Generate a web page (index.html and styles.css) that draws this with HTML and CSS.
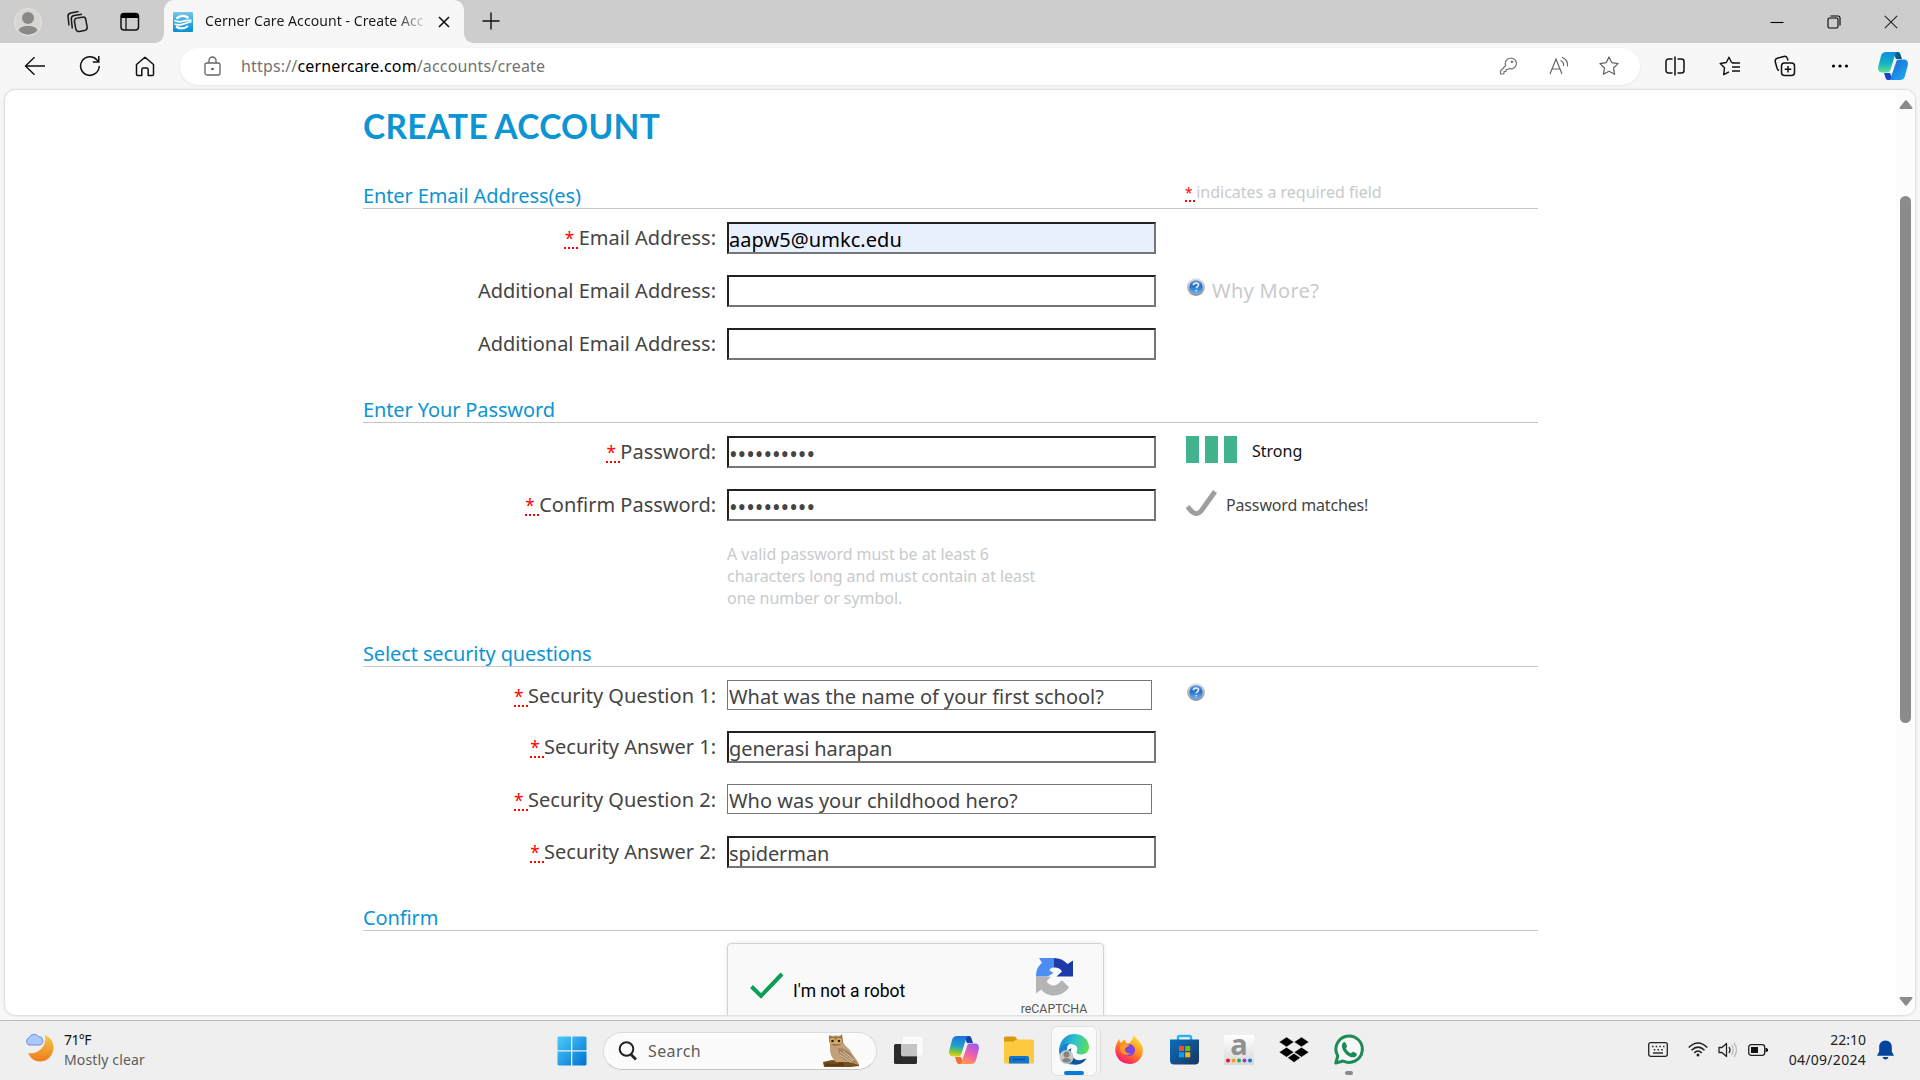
FILE: index.html
```html
<!DOCTYPE html>
<html lang="en">
<head>
<meta charset="utf-8">
<title>Cerner Care Account - Create Account</title>
<link rel="stylesheet" href="styles.css">
</head>
<body>
<svg class="defs" width="0" height="0">
  <defs>
    <linearGradient id="help-ball" x1="0" y1="0" x2="0" y2="1"><stop offset="0" stop-color="#5a9ae0"/><stop offset=".45" stop-color="#2a6fc9"/><stop offset="1" stop-color="#58b4ff"/></linearGradient>
    <linearGradient id="help-rim" x1="0" y1="0" x2="0" y2="1"><stop offset="0" stop-color="#e6e6e6"/><stop offset="1" stop-color="#8f9296"/></linearGradient>
    <symbol id="help" viewBox="0 0 18 18">
      <circle cx="9" cy="9" r="9" fill="url(#help-rim)"/>
      <circle cx="9" cy="9" r="6.7" fill="url(#help-ball)"/>
      <path d="M6.4 7.3c0-1.6 1.1-2.4 2.6-2.4s2.6.8 2.6 2.1c0 1.7-2.3 1.6-2.3 3.2M9.3 12v1.5" fill="none" stroke="#e8f2ff" stroke-width="1.500"/>
    </symbol>
    <linearGradient id="cp-a" x1="0" y1="0" x2="0" y2="1"><stop offset="0" stop-color="#0b8fdc"/><stop offset=".55" stop-color="#14b3c4"/><stop offset="1" stop-color="#5be38c"/></linearGradient>
    <linearGradient id="cp-b" x1="0" y1="0" x2="1" y2="1"><stop offset="0" stop-color="#1d5fd0"/><stop offset="1" stop-color="#1fb0f5"/></linearGradient>
    <linearGradient id="cq-a" x1=".3" y1="0" x2=".2" y2="1"><stop offset="0" stop-color="#1a74e0"/><stop offset=".5" stop-color="#23a6c2"/><stop offset=".75" stop-color="#7fc63c"/><stop offset="1" stop-color="#f5d20b"/></linearGradient>
    <linearGradient id="cq-b" x1=".7" y1="0" x2=".3" y2="1"><stop offset="0" stop-color="#9a5af5"/><stop offset=".5" stop-color="#ee5fae"/><stop offset="1" stop-color="#ff9a4d"/></linearGradient>
  </defs>
</svg>

<div class="browser">
  <header class="tabstrip">
    <div class="tabstrip-tools">
      <svg class="avatar" width="28" height="34" viewBox="0 0 28 34"><ellipse cx="14" cy="17" rx="13.500" ry="13.500" fill="#d7d5d1" stroke="#e7e5e1"/><circle cx="14" cy="13" r="6" fill="#8b8886"/><path d="M4.5 25.5c1-3 4-4.500 9.500-4.500s8.500 1.500 9.500 4.500a13 13 0 0 1-19 0z" fill="#8b8886"/></svg>
      <svg class="copies" width="24" height="24" viewBox="0 0 24 24" fill="none" stroke="#1b1b1b" stroke-width="1.500"><rect x="9" y="7.500" width="11.500" height="13.500" rx="3" transform="rotate(-10 15 14)"/><path d="M6.300 18.500L5.300 9c-.2-2 .8-3 2.800-3.400L16 4.200M3 15.500L2 6.500c-.2-2 .8-3 2.800-3.400L12.500 1.500"/></svg>
      <svg class="vtabs" width="20" height="20" viewBox="0 0 20 20"><rect x="1" y="1.500" width="17.500" height="16.500" rx="3" fill="none" stroke="#111" stroke-width="1.500"/><path d="M1 6V4a3 3 0 0 1 3-3h11.500a3 3 0 0 1 3 3v2z" fill="#000"/><path d="M6 6v12" stroke="#111" stroke-width="1.300"/></svg>
    </div>
    <div class="tab">
      <svg width="20" height="20" viewBox="0 0 20 20"><defs><linearGradient id="fav" x1="0" y1="0" x2="0" y2="1"><stop offset="0" stop-color="#7cc6e6"/><stop offset=".5" stop-color="#35a9de"/><stop offset="1" stop-color="#0a8fd3"/></linearGradient></defs><rect width="20" height="20" rx="1" fill="url(#fav)"/><path d="M3.500 6.500Q9.500 1.500 15.500 6" fill="none" stroke="#fff" stroke-width="2.400"/><path d="M1.500 8.500q4 2 8 .8t9-.8M1.500 12q4 1.500 8 .3t9-2.800" fill="none" stroke="#fff" stroke-width="1.800"/><path d="M3 14.500q6 4.200 12-.5" fill="none" stroke="#fff" stroke-width="2.200"/></svg>
      <span class="tab-title">Cerner Care Account - Create Acc</span>
      <svg class="tab-close" width="12" height="12" viewBox="0 0 12 12"><path d="M1 1l10 10M11 1L1 11" stroke="#111" stroke-width="1.600"/></svg>
    </div>
    <svg class="tab-new" width="18" height="18" viewBox="0 0 18 18"><path d="M9 .5v17M.5 9h17" stroke="#111" stroke-width="1.400"/></svg>
    <div class="window-buttons">
      <svg width="14" height="14" viewBox="0 0 14 14"><path d="M.5 7.500h13" stroke="#000" stroke-width="1.100"/></svg>
      <svg width="14" height="14" viewBox="0 0 14 14" fill="none" stroke="#000" stroke-width="1.100"><rect x="1" y="3" width="10" height="10" rx="1.500"/><path d="M3.500 1h7.500a2 2 0 0 1 2 2v7.500"/></svg>
      <svg width="14" height="14" viewBox="0 0 14 14"><path d="M.8.800l12.400 12.400M13.200.8L.8 13.200" stroke="#222" stroke-width="1.100"/></svg>
    </div>
  </header>

  <nav class="toolbar">
    <div class="slot"><svg width="22" height="20" viewBox="0 0 22 20" fill="none" stroke="#111" stroke-width="1.400"><path d="M21 10H1.500M10.500 1.200L1.500 10l9 8.800"/></svg></div>
    <div class="slot"><svg width="22" height="22" viewBox="0 0 22 22" fill="none" stroke="#111" stroke-width="1.500"><path d="M20.200 11A9.300 9.300 0 1 1 17.800 4.800l1.700 1.900M19.800 1v6h-6"/></svg></div>
    <div class="slot"><svg width="20" height="21" viewBox="0 0 20 21" fill="none" stroke="#111" stroke-width="1.500" stroke-linejoin="round"><path d="M1.500 8.500L10 1.200l8.500 7.300V18.500a1 1 0 0 1-1 1h-4.300v-5.800c0-1.200-.8-1.700-1.700-1.700h-3c-1 0-1.700.5-1.700 1.700v5.800H2.500a1 1 0 0 1-1-1z"/></svg></div>
    <div class="address">
      <svg class="lock" width="17" height="20" viewBox="0 0 17 20" fill="none" stroke="#666" stroke-width="1.300"><rect x="1" y="7" width="15" height="12" rx="2"/><path d="M5 7V4.500a3.500 3.500 0 0 1 7 0V7"/><circle cx="8.500" cy="13" r="1.300" fill="#555" stroke="none"/></svg>
      <span class="url">https://<b>cernercare.com</b>/accounts/create</span>
      <svg class="addr-icon" width="18" height="18" viewBox="0 0 18 18" fill="none" stroke="#767676" stroke-width="1.200" stroke-linejoin="round"><path d="M11.500 1.200a5.300 5.300 0 1 1-1.300 10.200L8.800 12.500H7v2H5v2l-.6.500H1.500V14l5.200-5.500A5.300 5.300 0 0 1 11.500 1.200z"/><circle cx="13" cy="4.800" r=".8"/></svg>
      <svg class="addr-icon" width="20" height="20" viewBox="0 0 20 20" fill="none" stroke="#666" stroke-width="1.200"><path d="M1 18L7 3l6 15M3.200 13h7.700M11.500 4.500a5 5 0 0 1 3 5.500M13 1.200a9 9 0 0 1 5.500 9.300"/></svg>
      <svg class="addr-icon last" width="20" height="20" viewBox="0 0 20 20" fill="none" stroke="#666" stroke-width="1.300" stroke-linejoin="round"><path d="M10 1l2.800 5.700 6.300.9-4.600 4.400 1.100 6.300L10 15.300l-5.600 3 1.100-6.300L.9 7.600l6.300-.9z"/></svg>
    </div>
    <div class="slot"><svg width="20" height="20" viewBox="0 0 20 20" fill="none" stroke="#111" stroke-width="1.500"><path d="M7.500 3H3.500a2.500 2.500 0 0 0-2.500 2.500v9A2.500 2.500 0 0 0 3.500 17h4M12.500 3h4A2.500 2.500 0 0 1 19 5.500v9a2.500 2.500 0 0 1-2.500 2.500h-4M10 .5v19"/></svg></div>
    <div class="slot"><svg width="22" height="20" viewBox="0 0 22 20" fill="none" stroke="#111" stroke-width="1.400" stroke-linejoin="round"><path d="M12.500 6.500L10 1.200 7.300 6.500 1.200 7.500l4.300 4.200-.8 7 5.300-2.900M12.500 6.500l4.500.6M13 11h8M13 7h8M13 15h8" /></svg></div>
    <div class="slot"><svg width="22" height="22" viewBox="0 0 22 22" fill="none" stroke="#111" stroke-width="1.500"><rect x="7.500" y="8" width="13" height="12.500" rx="3"/><path d="M14 11v6.500M10.700 14.200h6.600M5 15.500a4 4 0 0 1-2.200-3L1.200 6.500a3 3 0 0 1 2-3.300L10 1.400a3 3 0 0 1 3.300 1.800l.7 2.300"/></svg></div>
    <div class="slot"><svg width="18" height="4" viewBox="0 0 18 4"><circle cx="2.500" cy="2" r="1.600"/><circle cx="9" cy="2" r="1.600"/><circle cx="15.500" cy="2" r="1.600"/></svg></div>
    <div class="slot copilot-slot"><svg width="30" height="28" viewBox="0 0 30 28"><path d="M15 0h5c1.500 0 2.200 1.200 2.700 3l1.300 4h-6z" fill="#0b5a86"/><path d="M8 0h11c-1.500 1-2 2.500-2.500 4.500L13 17c-.8 2.500-2 3.500-4.500 3.500H4C0 20.500-.5 17 .5 13.500L3 4C4 1 5.500 0 8 0z" fill="url(#cp-a)"/><path d="M15 28h-5c-1.500 0-2.200-1.200-2.700-3L6 21h6z" fill="#1742c9"/><path d="M22 28H11c1.500-1 2-2.500 2.500-4.500L17 11c.8-2.500 2-3.500 4.500-3.500H26c4 0 4.500 3.500 3.500 7L27 24c-1 3-2.500 4-5 4z" fill="url(#cp-b)"/><path d="M19 7.500L14.500 20.500 11.500 20.500 16 7.500z" fill="#f7f7f7"/></svg></div>
  </nav>

  <div class="viewport">
    <main class="page">
      <h1>CREATE ACCOUNT</h1>

      <section>
        <div class="section-head"><h2>Enter Email Address(es)</h2><p class="required-note"><abbr>* </abbr>indicates a required field</p></div>
        <div class="row"><label><abbr>* </abbr>Email Address:</label><input class="autofill" value="aapw5@umkc.edu"></div>
        <div class="row"><label>Additional Email Address:</label><input><div class="aside why"><svg width="18" height="18"><use href="#help"/></svg><span>Why More?</span></div></div>
        <div class="row"><label>Additional Email Address:</label><input></div>
      </section>

      <section>
        <div class="section-head"><h2>Enter Your Password</h2></div>
        <div class="row"><label><abbr>* </abbr>Password:</label><input class="dots" type="password" value="passw0rd12"><div class="aside strength"><i></i><i></i><i></i><span>Strong</span></div></div>
        <div class="row"><label><abbr>* </abbr>Confirm Password:</label><input class="dots" type="password" value="passw0rd12"><div class="aside match"><svg width="32" height="30" viewBox="0 0 32 30"><path d="M1.500 17.500l4 4.700q5 5 9.500 0L29 2.500" fill="none" stroke="#9f9f9f" stroke-width="5"/></svg><span>Password matches!</span></div></div>
        <p class="hint">A valid password must be at least 6<br>characters long and must contain at least<br>one number or symbol.</p>
      </section>

      <section>
        <div class="section-head"><h2>Select security questions</h2></div>
        <div class="row row-q1"><label><abbr>* </abbr>Security Question 1:</label><div class="select">What was the name of your first school?</div><div class="aside q-help"><svg width="18" height="18"><use href="#help"/></svg></div></div>
        <div class="row"><label><abbr>* </abbr>Security Answer 1:</label><input value="generasi harapan"></div>
        <div class="row row-q2"><label><abbr>* </abbr>Security Question 2:</label><div class="select">Who was your childhood hero?</div></div>
        <div class="row"><label><abbr>* </abbr>Security Answer 2:</label><input value="spiderman"></div>
      </section>

      <section>
        <div class="section-head"><h2>Confirm</h2></div>
        <div class="captcha">
          <svg class="captcha-tick" width="36" height="28" viewBox="0 0 36 28"><path d="M2.500 14.500l9.500 9.500L33 2" fill="none" stroke="#0c9d58" stroke-width="4"/></svg>
          <span class="captcha-text">I'm not a robot</span>
          <div class="captcha-brand">
            <svg width="38" height="39" viewBox="0 0 38 39"><path d="M1 19.500C1 13 3.500 8.500 7 6L4 1h15v9.500c-3 0-4.500 1.500-4.500 3l4 2.500-6 3.500z" fill="#4c8df5"/><path d="M19 1c5.500 0 10 2 13.500 6L38 3.500v16H21.500l5.500-5c-1.500-3-4.500-4.300-8-4z" fill="#1c3aa9"/><path d="M1 19.500h15l-4.300 4.800c2 4.500 8 5.500 11.800 2.200l3.500-3.200 7 7C29.500 36.500 24 38.500 19 38.500c-5.500 0-10-2.300-12.800-6L1 36.500z" fill="#b4b4b4"/></svg>
            <span>reCAPTCHA</span>
          </div>
        </div>
      </section>
    </main>
    <div class="scrollbar">
      <svg width="14" height="10" viewBox="0 0 14 10"><path d="M1.500 9a1 1 0 0 1-.8-1.500L5.800 1a1.500 1.500 0 0 1 2.400 0l5.100 6.500a1 1 0 0 1-.8 1.500z" fill="#8b8b8b"/></svg>
      <div class="thumb"></div>
      <svg width="14" height="10" viewBox="0 0 14 10"><path d="M1.500 1a1 1 0 0 0-.8 1.500L5.800 9a1.500 1.500 0 0 0 2.400 0l5.100-6.500a1 1 0 0 0-.8-1.500z" fill="#8b8b8b"/></svg>
    </div>
  </div>
</div>

<footer class="taskbar">
  <div class="weather">
    <svg width="29" height="30" viewBox="0 0 29 30"><defs><linearGradient id="moon" x1="0" y1="0" x2="0" y2="1"><stop offset="0" stop-color="#f6c944"/><stop offset="1" stop-color="#ee7b1c"/></linearGradient></defs><path d="M20 2c5 2 8.500 6.500 8.500 12.500 0 8-6 14-13.500 14-5 0-9.500-2.700-12-8.500 8 1.500 19-4 17-18z" fill="url(#moon)"/><path d="M4 12a4 4 0 0 1 .3-7.500A5.300 5.300 0 0 1 13.500 3.500a4.300 4.300 0 0 1 1 8.500z" fill="#a9c8fb" stroke="#6b8fe0"/></svg>
    <div><p class="temp">71°F</p><p class="sky">Mostly clear</p></div>
  </div>
  <svg class="start" width="30" height="30" viewBox="0 0 30 30"><defs><linearGradient id="win" gradientUnits="userSpaceOnUse" x1="0" y1="0" x2="30" y2="30"><stop offset="0" stop-color="#4ccdfb"/><stop offset="1" stop-color="#0070d0"/></linearGradient></defs><path d="M1.500.500H14v13.700H.5V1.500zM15.300.500h13.200l1 1v12.700H15.300zM.5 15.500H14v14H1.500l-1-1zM15.300 15.500h14.200v13l-1 1H15.300z" fill="url(#win)"/></svg>
  <div class="search">
    <svg width="20" height="20" viewBox="0 0 20 20" fill="none" stroke="#222" stroke-width="2"><circle cx="8.500" cy="8" r="6.800"/><path d="M13 13.500l5 5" stroke-width="2.600"/></svg>
    <span>Search</span>
    <svg class="owl" width="37" height="33" viewBox="0 0 37 33"><path d="M0 28l9-2 12 1 15 3v2l-8 1H1z" fill="#76501c"/><path d="M2 29l10 1 8-2 1 4H2z" fill="#5e3c10"/><path d="M7 2q6-1 12 0l1 6q2 4 6 7l9 13 1 3-9-3H13Q6 22 7 12z" fill="#c2a078"/><path d="M15 14q6 0 11 4l9 12-8-2Q16 26 15 14z" fill="#a48460"/><path d="M17 18l13 9M17 21l11 7M20 17l11 9" stroke="#e6d8c0" stroke-width=".8"/><path d="M6 1l4 2q4-1 6 0l3-3 1 8q-3 4-7 4T6 8z" fill="#9a7648"/><circle cx="9.500" cy="7" r="3" fill="#d8b070"/><circle cx="16" cy="7" r="3" fill="#d8b070"/><circle cx="9.500" cy="7" r="1.300" fill="#2a1c08"/><circle cx="16" cy="7" r="1.300" fill="#2a1c08"/><path d="M12 8h2l-1 3z" fill="#f0d060"/></svg>
  </div>
  <div class="apps">
    <div class="app"><svg width="30" height="28" viewBox="0 0 30 28"><rect x="0" y="8" width="23" height="20" rx="1.500" fill="#2b2b2b"/><rect x="7.500" y="0" width="22" height="20" rx="1.500" fill="#fafafa" stroke="#e0e0e0" stroke-width=".6"/><path d="M7.500 8H23v12H9q-1.500 0-1.500-1.500z" fill="#c4c4c4"/></svg></div>
    <div class="app"><svg width="30" height="28" viewBox="0 0 30 28"><path d="M15 0h5c1.500 0 2.200 1.200 2.700 3l1.300 4h-6z" fill="#1544a8"/><path d="M8 0h11c-1.500 1-2 2.500-2.500 4.500L13 17c-.8 2.500-2 3.500-4.500 3.500H4C0 20.500-.5 17 .5 13.500L3 4C4 1 5.500 0 8 0z" fill="url(#cq-a)"/><path d="M15 28h-5c-1.500 0-2.200-1.200-2.700-3L6 21h6z" fill="#f0702f"/><path d="M22 28H11c1.500-1 2-2.500 2.500-4.500L17 11c.8-2.500 2-3.500 4.500-3.500H26c4 0 4.500 3.500 3.500 7L27 24c-1 3-2.500 4-5 4z" fill="url(#cq-b)"/><path d="M19 7.500L14.500 20.500 11.500 20.500 16 7.500z" fill="#efefef"/></svg></div>
    <div class="app"><svg width="30" height="28" viewBox="0 0 30 28"><path d="M0 1.500Q0 .5 1.500.5h8.500q1 0 1.500.5l2 2.500v4H0z" fill="#d79a08"/><path d="M0 5.500h8q2 0 3-1l1-1h16.500q1.500 0 1.500 1.500v21q0 1.500-1.500 1.500h-27Q0 27.500 0 26z" fill="#fdca3f"/><path d="M5 27.500V22q0-2 2-2h16q2 0 2 2v5.500z" fill="#1275cf"/><path d="M9 23.500h12" stroke="#0a4d94" stroke-width="1.200"/></svg></div>
    <div class="app active"><svg width="30" height="31" viewBox="0 0 30 31"><defs><linearGradient id="edge-top" x1="0" y1=".3" x2="1" y2=".5"><stop offset="0" stop-color="#1b8bd8"/><stop offset=".5" stop-color="#2cc3d0"/><stop offset="1" stop-color="#5fdd57"/></linearGradient></defs><path d="M0 16C1 6 7 0 15.500 0 24 0 30 6 30 13c0 5-4 7.500-8 7.500-3 0-5-1-4.500-2.500C20 14 17 10 12 10 5 10 1.500 13 0 16z" fill="url(#edge-top)"/><path d="M0 16c1.500-4.500 6-7 10.500-6.500C8 11.500 7.500 15 8.500 19c1 5 5 9 10 10.500C8 33 0 26 0 16z" fill="#1583d4"/><path d="M12.500 14c-2.500 6 2 13.500 9.500 12 2.500-.4 4-1.500 5.500-1.500C25 28.500 21 31 16 30.700 9.500 29.500 6.500 21 8.500 16.500z" fill="#0c55a0"/><circle cx="7.500" cy="23" r="7" fill="#c9c7c4"/><circle cx="7.500" cy="20.500" r="3" fill="#85827f"/><path d="M3 27q1-3 4.500-3t4.500 3q-4.500 3-9 0z" fill="#85827f"/></svg></div>
    <div class="app"><svg width="28" height="29" viewBox="0 0 28 29"><defs><linearGradient id="fox" x1=".8" y1="0" x2=".2" y2="1"><stop offset="0" stop-color="#ffe83b"/><stop offset=".45" stop-color="#ff8f1f"/><stop offset=".8" stop-color="#ff3552"/><stop offset="1" stop-color="#e5158a"/></linearGradient></defs><path d="M19 0c1 3 6.500 6 8.500 12 2 9-4 17-13 17C5.500 29 0 22 .3 14.500.5 10 2 7 4.500 4c0 2 .5 3 1.500 4 1-2 2.500-3 4.500-3.500C10 6 11 8 13 8.500c3-1 5-5 6-8.500z" fill="url(#fox)"/><circle cx="14" cy="15" r="6" fill="#7a45e0"/><path d="M5 9c4-2 7 0 9.500 1-1 2-4 2-4.500 4-.5 3 3 5 6 4-4 4-11 1-11-5z" fill="#ff9626"/></svg></div>
    <div class="app"><svg width="29" height="31" viewBox="0 0 29 31"><defs><linearGradient id="bag" x1="0" y1="0" x2="1" y2="1"><stop offset="0" stop-color="#0a6fc0"/><stop offset="1" stop-color="#1b3560"/></linearGradient></defs><path d="M8 7V3.500Q8 2 9.500 2h10Q21 2 21 3.500V7" fill="none" stroke="#29b3f2" stroke-width="2.400"/><path d="M0 5.500h29v21q0 4-4 4H4q-4 0-4-4z" fill="url(#bag)"/><path d="M9 12h5v5H9z" fill="#f25022"/><path d="M15.200 12h5v5h-5z" fill="#7fba00"/><path d="M9 18.300h5v5H9z" fill="#00a4ef"/><path d="M15.200 18.300h5v5h-5z" fill="#ffb900"/></svg></div>
    <div class="app"><div class="amazon"><span>a</span><svg width="28" height="5" viewBox="0 0 28 5"><circle cx="3" cy="2.500" r="2" fill="#e8112d"/><circle cx="8.500" cy="2.500" r="2" fill="#f39c12"/><circle cx="14" cy="2.500" r="2" fill="#2fa84f"/><circle cx="19.500" cy="2.500" r="2" fill="#8e3fd1"/><circle cx="25" cy="2.500" r="2" fill="#1a73d9"/></svg></div></div>
    <div class="app"><svg width="30" height="26" viewBox="0 0 30 26"><path d="M7.500 0L15 5 7.500 10 0 5zM22.500 0L30 5l-7.500 5L15 5zM7.500 10.200L15 15.200 7.500 20.200 0 15.200zM22.500 10.200l7.500 5-7.500 5-7.500-5zM15 16.200l6.500 4.500L15 25.500l-6.500-4.800z" stroke="#efefef" stroke-width=".6"/></svg></div>
    <div class="app open"><svg width="30" height="31" viewBox="0 0 30 31"><path d="M1.800 29l2-7A13.200 13.200 0 1 1 9.200 27z" fill="#fff" fill-opacity=".5" stroke="#1d8a57" stroke-width="3" stroke-linejoin="round"/><path d="M8.500 9.500c1-2 2.500-2 3.300-.3l1.200 2.700c.4.900-1.300 2.200-1.100 2.700 1 2.200 2.800 3.800 5 4.700.7.200 1.600-1.800 2.400-1.600l3 1.500c1.200.7.300 3-1.300 3.700-3 1.300-6.500-.8-8.500-2.500-2.500-2.300-6-7-4-10.900z" fill="#1d8a57"/></svg></div>
  </div>
  <div class="tray">
    <svg width="20" height="15" viewBox="0 0 20 15"><rect x=".7" y=".7" width="18.600" height="13.600" rx="2" fill="none" stroke="#222" stroke-width="1.300"/><path d="M4 4.500h12.500M5.800 7.700h9" stroke="#222" stroke-width="1.500" stroke-dasharray="1.500 2.200"/><path d="M5 11h10" stroke="#222" stroke-width="1.400"/></svg>
    <svg class="wifi" width="20" height="15" viewBox="0 0 20 15" fill="none" stroke="#222" stroke-width="1.500"><path d="M.7 5.500Q10-3.500 19.300 5.500M3.500 8.300q6.500-6.300 13 0M6.200 11q3.800-3.800 7.600 0"/><circle cx="10" cy="13" r="1.500" fill="#222" stroke="none"/></svg>
    <svg class="sound" width="20" height="16" viewBox="0 0 20 16" fill="none" stroke="#222" stroke-width="1.300"><path d="M1 5.500h3L8.500 1.500v13L4 10.500H1z" stroke-linejoin="round"/><path d="M11 5q2 3 0 6"/><path d="M13.500 3q3.500 5 0 10M16 1q5 7 0 14" stroke="#bbb"/></svg>
    <svg class="battery" width="20" height="12" viewBox="0 0 20 12"><rect x=".7" y=".7" width="16" height="10.600" rx="2.500" fill="none" stroke="#222" stroke-width="1.300"/><rect x="3" y="3" width="7" height="6" fill="#111"/><path d="M17.500 4h1l1.500 1v2l-1.500 1h-1z" fill="#111"/></svg>
    <div class="clock"><p>22:10</p><p class="date">04/09/2024</p></div>
    <svg class="bell" width="17" height="20" viewBox="0 0 17 20"><path d="M8.500.5c4 0 6.300 3 6.300 6.500v4.500L17 15.800H0l2.200-4.300V7C2.200 3.500 4.500.5 8.500.5zM5.500 17h6q-.8 2.500-3 2.500t-3-2.500z" fill="#03459c"/></svg>
  </div>
</footer>
</body>
</html>
```
FILE: styles.css
```css
* { box-sizing: border-box; margin: 0; padding: 0; }
body { width: 1920px; height: 1080px; overflow: hidden; background: #f7f7f7; font-family: "Noto Sans", "Open Sans", sans-serif; color: #444; }
svg { display: block; flex: none; }
.defs { position: absolute; }

.browser { height: 1020px; display: flex; flex-direction: column; }

.tabstrip { height: 43px; flex: none; display: flex; align-items: center; background: #cdcdcd; }
.tabstrip-tools { width: 164px; height: 42px; flex: none; display: flex; align-items: center; padding-left: 14px; }
.copies { margin-left: 24px; }
.vtabs { margin-left: 30px; }
.tab { width: 300px; height: 43px; flex: none; display: flex; align-items: center; padding-left: 9px; background: #f7f7f7; border-radius: 10px 10px 0 0; position: relative; }
.tab::before, .tab::after { content: ""; position: absolute; bottom: 0; width: 9px; height: 9px; }
.tab::before { left: -9px; background: radial-gradient(circle at 0 0, #cdcdcd 8.500px, #f7f7f7 9px); }
.tab::after { right: -9px; background: radial-gradient(circle at 100% 0, #cdcdcd 8.500px, #f7f7f7 9px); }
.tab-title { width: 224px; margin-left: 12px; white-space: nowrap; font-size: 14px; line-height: 22px; letter-spacing: .07px; color: #1b1b1b; margin-top: -2px; -webkit-mask-image: linear-gradient(90deg, #000 190px, transparent 224px); mask-image: linear-gradient(90deg, #000 190px, transparent 224px); }
.tab-close { margin-left: 9px; }
.tab-new { margin-left: 18px; margin-top: -2px; }
.window-buttons { margin-left: auto; display: flex; gap: 43px; padding-right: 22px; }

.toolbar { height: 47px; flex: none; display: flex; align-items: center; padding: 0 0 1px 7px; }
.slot { width: 55px; flex: none; display: flex; justify-content: center; }
.copilot-slot { width: 52px; }
.address { width: 1460px; height: 37px; margin: 0 7px 0 8px; display: flex; align-items: center; padding: 0 21px 0 24px; background: #fff; border-radius: 19px; box-shadow: 0 1px 3px rgba(0, 0, 0, .08); }
.url { margin: 0 auto 0 20px; font-size: 16px; letter-spacing: .16px; color: #737373; }
.url b { font-weight: 400; color: #000; }
.addr-icon { margin-left: 32px; }
.addr-icon.last { margin-left: 30px; }

.viewport { height: 925px; flex: none; margin: 0 5px; display: flex; justify-content: space-between; background: #fff; border-radius: 10px; overflow: hidden; box-shadow: 0 0 3px rgba(0, 0, 0, .25); }
.page { width: 1175px; margin-left: 358px; height: 925px; overflow: hidden; }
h1 { height: 77px; padding-top: 11px; font: 700 33.500px/50px Lato, sans-serif; letter-spacing: .3px; word-spacing: -1px; color: #0d94d2; }
h2 { height: 25px; font-size: 20px; line-height: 26px; font-weight: 400; letter-spacing: -.12px; color: #0d94d2; }
.section-head { height: 42px; display: flex; justify-content: space-between; align-items: flex-end; border-bottom: 1px solid #c5c7c9; margin-bottom: 13px; }
.required-note { width: 353px; padding-bottom: 4px; font-size: 16px; line-height: 22px; color: #c8cacc; }
abbr { color: #f00; font-size: .86em; white-space: pre; text-decoration: underline dotted 2px; text-underline-offset: 2px; }
.row { height: 53px; display: flex; align-items: flex-start; }
.row-q1 { height: 51px; }
.row-q2 { height: 52px; }
label { width: 353px; margin-right: 11px; flex: none; text-align: right; font-size: 20px; line-height: 32px; letter-spacing: -.02px; }
.row-q1 label, .row-q2 label { letter-spacing: 0; }
input { width: 429px; height: 32px; flex: none; padding: 2px 0 0 0; border: 2px solid; border-color: #222 #767676 #767676 #222; background: #fff; font: 20px "Noto Sans", sans-serif; letter-spacing: -.1px; color: #444; outline: 0; }
.autofill { background: #e8f0fe; color: #000; letter-spacing: .05px; }
.dots { padding: 3px 0 0 0; font-size: 23px; letter-spacing: -.05px; }
.select { width: 425px; height: 30px; margin-right: 4px; flex: none; padding-left: 1px; border: 1px solid #767676; font-size: 20px; line-height: 31px; white-space: nowrap; letter-spacing: -.01px; }
.aside { margin-left: 30px; display: flex; align-items: flex-start; }
.why { padding-left: 1px; color: #c8cacc; }
.why svg { margin: 3px 7px 0 0; }
.why span { font-size: 20px; line-height: 32px; letter-spacing: .3px; }
.strength i { width: 13px; height: 27px; margin-right: 6px; background: #41b38e; }
.strength span { margin-left: 9px; font-size: 16px; line-height: 30px; color: #111; }
.match span { margin-left: 8px; font-size: 16px; line-height: 33px; letter-spacing: -.15px; }
.q-help { padding: 3px 0 0 1px; }
.hint { margin: 1px 0 16px 364px; font-size: 16px; line-height: 22px; letter-spacing: -.05px; color: #c8cacc; }

.captcha { width: 377px; height: 97px; margin: -1px 0 0 364px; display: flex; align-items: flex-start; background: #f9f9f9; border: 1px solid #d3d3d3; border-radius: 4px; box-shadow: 0 0 4px rgba(0, 0, 0, .1); font-family: Roboto, sans-serif; }
.captcha-tick { margin: 28px 0 0 21px; }
.captcha-text { margin: 35px 0 0 8px; font-size: 17.500px; line-height: 24px; color: #000; }
.captcha-brand { width: 70px; margin: 13px 14px 0 auto; display: flex; flex-direction: column; align-items: center; font-size: 12.300px; line-height: 14px; color: #555; gap: 6px; }

.scrollbar { width: 19px; display: flex; flex-direction: column; align-items: center; background: #fcfcfc; padding: 10px 0 9px; }
.thumb { width: 11px; height: 527px; margin: 86px 0 auto; background: #8b8b8b; border-radius: 6px; }

.taskbar { height: 60px; display: flex; align-items: center; background: #efefef; border-top: 1px solid #bcbcbc; }
.weather { width: 532px; height: 59px; margin-left: 25px; flex: none; display: flex; padding-top: 12px; }
.weather div { margin: -3px 0 0 10px; font-size: 14px; line-height: 20px; }
.temp { color: #111; letter-spacing: -.6px; }
.sky { color: #5c5c5c; letter-spacing: .15px; }
.search { width: 274px; height: 38px; margin-left: 16px; flex: none; display: flex; align-items: center; padding: 0 16px 0 14px; background: #fbfbfb; border: 1px solid #dcdcdc; border-bottom-color: #c4c4c4; border-radius: 19px; }
.search span { margin: 0 auto 0 10px; font-size: 16px; letter-spacing: .4px; color: #5c5c5c; }
.apps { margin-left: 10px; display: flex; gap: 11px; }
.app { width: 44px; height: 48px; display: flex; align-items: center; justify-content: center; position: relative; }
.active { background: #fafafa; border-radius: 5px; box-shadow: 0 0 0 1px #e2e2e2, 4px 0 0 0 #f4f4f4, 5px 0 0 0 #dedede; }
.active::after, .open::after { content: ""; position: absolute; bottom: 0; left: 12px; width: 20px; height: 4px; border-radius: 2px; background: #0a78d4; }
.open::after { left: 18px; width: 8px; background: #8a8a8a; }
.app svg, .amazon { margin-top: -2px; }
.app .amazon svg { margin: 0; }
.amazon { width: 30px; height: 30px; display: flex; flex-direction: column; align-items: center; background: linear-gradient(#fff, #d8d8d8); }
.amazon span { height: 23px; font: 700 29px/17px "Open Sans", sans-serif; color: #8f8f8f; }
.tray { margin: -2px 0 0 auto; display: flex; align-items: center; padding-right: 26px; }
.wifi { margin-left: 20px; }
.sound { margin-left: 10px; }
.battery { margin-left: 10px; }
.clock { width: 98px; text-align: right; font-size: 14px; line-height: 20px; color: #222; margin-right: 11px; }
.date { letter-spacing: .28px; }
```
